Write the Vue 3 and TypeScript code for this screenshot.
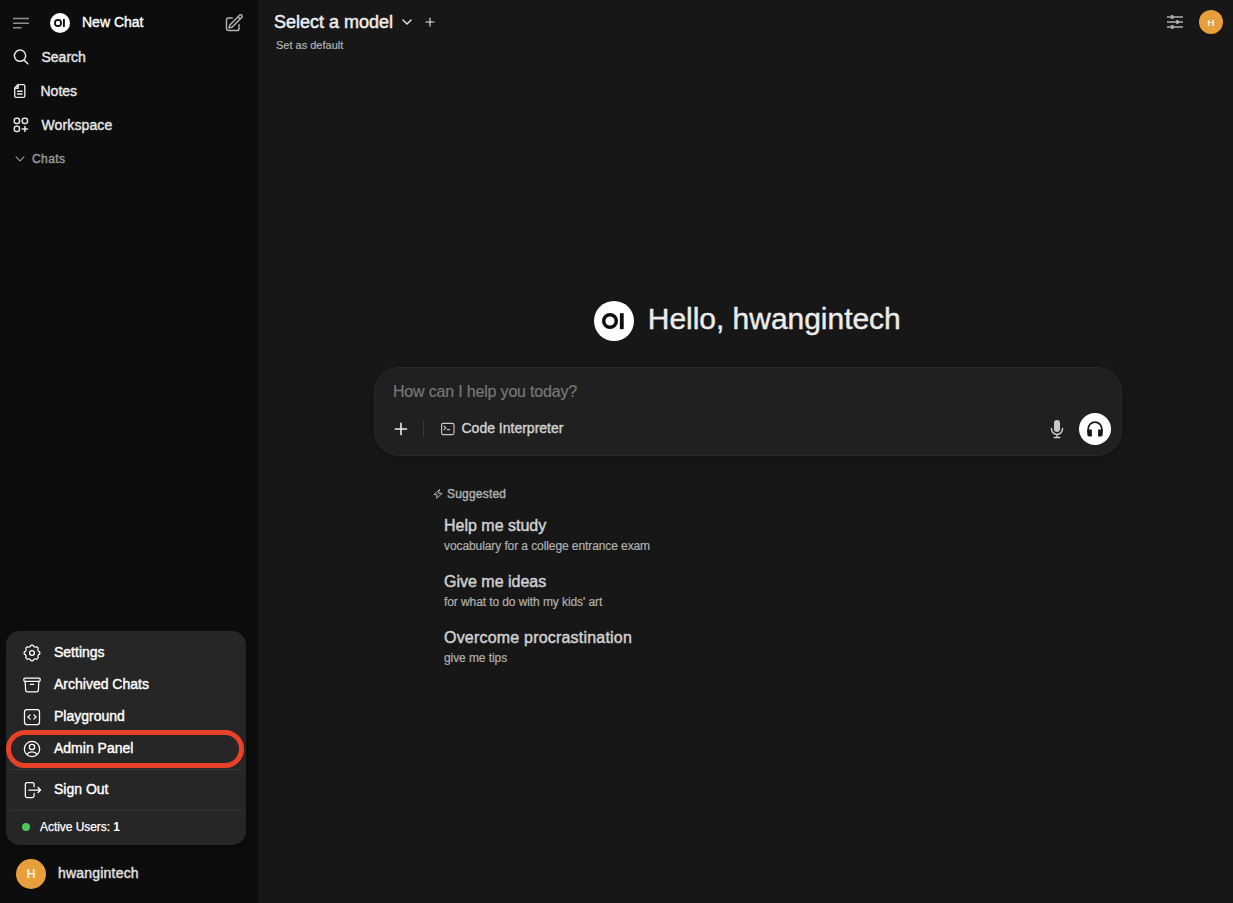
<script setup lang="ts">
interface Suggestion { title: string; detail: string; cls: string }
const suggestions: Suggestion[] = [
  { title: 'Help me study', detail: 'vocabulary for a college entrance exam', cls: 'tight' },
  { title: 'Give me ideas', detail: "for what to do with my kids' art", cls: 'tight' },
  { title: 'Overcome procrastination', detail: 'give me tips', cls: 'wide' },
]

// Gear outline: shallow rounded teeth around a circle.
function gearPath(teeth: number, radius: number, depth: number): string {
  const points: string[] = []
  const steps = teeth * 16
  for (let i = 0; i < steps; i++) {
    const a = (i / steps) * Math.PI * 2
    const r = radius + depth * Math.tanh(2 * Math.cos(teeth * a))
    points.push(`${(12 + r * Math.sin(a)).toFixed(2)} ${(12 - r * Math.cos(a)).toFixed(2)}`)
  }
  return `M${points.join('L')}Z`
}
const gear = gearPath(8, 8.7, 0.75)
</script>

<template>
  <div class="app">
    <aside class="sidebar">
      <header class="brand">
        <svg class="burger" viewBox="0 0 16 14"><path d="M0 2.5h16M0 7.2h16M0 11.8h8.5" /></svg>
        <svg class="logo" viewBox="0 0 40 40"><circle cx="20" cy="20" r="20" fill="#fff" /><circle cx="16" cy="20" r="6.2" fill="none" stroke="#0d0d0d" stroke-width="3.5" /><path d="M27.8 12v16" stroke="#0d0d0d" stroke-width="3.8" /></svg>
        <span class="brand-name">New Chat</span>
        <svg class="compose" viewBox="0 0 24 24"><path d="m16.86 4.49 1.69-1.69a1.88 1.88 0 1 1 2.65 2.65L10.58 16.07a4.5 4.5 0 0 1-1.9 1.13L6 18l.8-2.69a4.5 4.5 0 0 1 1.13-1.9zM16.86 4.49 19.5 7.13M18 14v4.75A2.25 2.25 0 0 1 15.75 21H5.25A2.25 2.25 0 0 1 3 18.75V8.25A2.25 2.25 0 0 1 5.25 6H10" /></svg>
      </header>
      <nav>
        <a class="nav-item"><svg viewBox="0 0 24 24" stroke-width="2"><path d="m21 21-5.2-5.2m0 0A7.5 7.5 0 1 0 5.2 5.2a7.5 7.5 0 0 0 10.6 10.6Z" /></svg><span>Search</span></a>
        <a class="nav-item notes"><svg viewBox="0 0 18 18" stroke-width="1.4"><path d="M6.1 2.6h5.3a1.4 1.4 0 0 1 1.4 1.4v10a1.4 1.4 0 0 1-1.4 1.4H4.1a1.4 1.4 0 0 1-1.4-1.4V6zM6.2 2.9v3.3H2.9M5.5 9.2h4.6M5.5 12h4.6" /></svg><span>Notes</span></a>
        <a class="nav-item"><svg viewBox="0 0 18 18" stroke-width="1.5"><rect x="2.3" y="2.3" width="5.2" height="5.2" rx="2" /><rect x="10.3" y="2.3" width="5.2" height="5.2" rx="2" /><rect x="2.3" y="10.3" width="5.2" height="5.2" rx="2" /><path d="M12.9 10.4v5.2M10.3 13H15.5" /></svg><span class="workspace">Workspace</span></a>
      </nav>
      <div class="chats"><svg viewBox="0 0 12 12"><path d="m2 3.8 4 4 4-4" /></svg><span>Chats</span></div>

      <section class="menu">
        <a class="menu-item"><svg viewBox="0 0 24 24"><path :d="gear" /><circle cx="12" cy="12" r="2.9" /></svg><span>Settings</span></a>
        <a class="menu-item"><svg viewBox="0 0 24 24"><path d="m20.25 7.5-.63 10.63A2.25 2.25 0 0 1 17.38 20.25H6.62a2.25 2.25 0 0 1-2.24-2.12L3.75 7.5M10 11.2h4M3.38 7.5h17.24c.63 0 1.13-.5 1.13-1.12V4.87c0-.62-.5-1.12-1.13-1.12H3.38c-.63 0-1.13.5-1.13 1.12v1.51c0 .62.5 1.12 1.13 1.12Z" /></svg><span>Archived Chats</span></a>
        <a class="menu-item"><svg viewBox="0 0 24 24"><rect x="3" y="3" width="18" height="18" rx="2.8" /><path d="M14.3 9.5 16.8 12l-2.5 2.5M9.7 14.5 7.2 12l2.5-2.5" /></svg><span>Playground</span></a>
        <a class="menu-item"><svg viewBox="0 0 24 24"><circle cx="12" cy="12" r="9.2" /><circle cx="12" cy="9.6" r="3.2" /><path d="M5.8 18.6a7.5 7.5 0 0 1 12.4 0" /></svg><span>Admin Panel</span><i class="highlight" /></a>
        <hr />
        <a class="menu-item"><svg viewBox="0 0 24 24"><path d="M14.5 8V5.2A2.2 2.2 0 0 0 12.3 3H6.2A2.2 2.2 0 0 0 4 5.2v13.6A2.2 2.2 0 0 0 6.2 21h6.1a2.2 2.2 0 0 0 2.2-2.2V16M8.2 12h14M19.3 9l3 3-3 3" /></svg><span>Sign Out</span></a>
        <hr />
        <div class="active"><b class="dot" /><span>Active Users: <strong>1</strong></span></div>
      </section>

      <footer class="user"><div class="avatar">H</div><span>hwangintech</span></footer>
    </aside>

    <main class="main">
      <header class="topbar">
        <div>
          <div class="model"><span>Select a model</span><svg class="chev" viewBox="0 0 12 12"><path d="m2 4 4 4 4-4" /></svg><svg class="add" viewBox="0 0 10 10"><path d="M5 1v8M1 5h8" /></svg></div>
          <div class="default">Set as default</div>
        </div>
        <div class="tools">
          <svg class="sliders" viewBox="0 0 16 14"><path d="M0 2h3.5M6.5 2H16M0 7h8.5M11.5 7H16M0 12h3.5M6.5 12H16" /><circle class="fill" cx="5.2" cy="2" r="1.9" /><circle class="fill" cx="10.3" cy="7" r="1.9" /><circle class="fill" cx="5.2" cy="12" r="1.9" /></svg>
          <div class="avatar small">H</div>
        </div>
      </header>

      <div class="center">
        <h1><svg viewBox="0 0 40 40"><circle cx="20" cy="20" r="20" fill="#fff" /><circle cx="16" cy="20" r="6.3" fill="none" stroke="#0d0d0d" stroke-width="3.4" /><path d="M27.8 12.2v16" stroke="#0d0d0d" stroke-width="3.8" /></svg><span>Hello, hwangintech</span></h1>
        <section class="composer">
          <div class="placeholder">How can I help you today?</div>
          <div class="actions">
            <svg class="plus" viewBox="0 0 12 12"><path d="M6 .4v11.2M.4 6h11.2" /></svg>
            <i class="sep" />
            <svg class="terminal" viewBox="0 0 14 12"><rect x=".6" y=".4" width="12.4" height="11.2" rx="1.6" /><path d="m3 3.2 2 1.7-2 1.7M6.3 6.6h2.2" /></svg>
            <span class="code">Code Interpreter</span>
            <svg class="mic" viewBox="0 0 14 20"><rect x="4" y="1" width="6" height="12" rx="3" class="fill" /><path d="M1.5 9.4v.6a5.5 5.5 0 0 0 11 0v-.6M7 15.5v3M4.2 18.6h5.6" /></svg>
            <button class="voice" aria-label="Voice"><svg viewBox="0 0 16 16"><path d="M1.2 11V8a6.8 6.8 0 0 1 13.6 0v3" /><path class="fill" d="M.3 8.6h4.6v6.8H2.3a2 2 0 0 1-2-2zM11.1 8.6h4.6v4.8a2 2 0 0 1-2 2h-2.6z" /></svg></button>
          </div>
        </section>
        <section class="suggested">
          <div class="label"><svg viewBox="0 0 12 12"><path d="M7.6.8 1 6.8h4L4.4 11.2l6.6-6h-4z" /></svg><span>Suggested</span></div>
          <article v-for="s in suggestions" :key="s.title" :class="s.cls"><h2>{{ s.title }}</h2><p>{{ s.detail }}</p></article>
        </section>
      </div>
    </main>
  </div>
</template>

<style>
body { background: #171717; }
</style>
<style scoped>
* { box-sizing: border-box; }
.app { width: 1233px; height: 903px; display: flex; overflow: hidden; background: #171717; color: #ececec; font-family: "Liberation Sans", Arial, sans-serif; font-size: 14px; -webkit-text-stroke: .4px currentColor; }
svg { fill: none; stroke: currentColor; stroke-linecap: round; stroke-linejoin: round; flex: none; display: block; overflow: visible; }
.sidebar { width: 258px; height: 903px; background: #0d0d0d; display: flex; flex-direction: column; flex: none; }
.brand { height: 40px; padding: 5px 14px 0 13px; display: flex; align-items: center; }
.burger { width: 16px; height: 14px; color: #8c8f8c; stroke-width: 1.6; stroke-linecap: butt; }
.logo { width: 20px; height: 20px; margin-left: 21px; stroke-linecap: butt; stroke: none; }
.brand-name { margin-left: 12px; line-height: 20px; margin-top: -1px; color: #fff; flex: 1; }
.compose { width: 20px; height: 20px; color: #b4b4b4; stroke-width: 1.7; }
.nav-item { height: 34px; padding-left: 12px; display: flex; align-items: center; gap: 11.5px; color: #e6e6e6; }
.nav-item svg { width: 18px; height: 18px; }
.nav-item span { line-height: 20px; }
.notes { gap: 10.5px; }
.workspace { letter-spacing: .12px; }
.chats { height: 34px; padding-left: 14px; display: flex; align-items: center; gap: 6px; color: #9b9b9b; font-size: 12px; letter-spacing: .4px; }
.chats svg { width: 12px; height: 12px; stroke-width: 1.1; }
.menu { width: 240px; height: 214px; margin: auto 0 0 6px; padding: 5px 4px; background: #262626; border-radius: 14px; box-shadow: 0 8px 14px #0004; color: #fff; }
.menu-item { position: relative; height: 32px; padding-left: 12px; display: flex; align-items: center; gap: 12px; }
.menu-item svg { width: 20px; height: 20px; stroke-width: 1.5; margin-top: 2px; }
.highlight { position: absolute; left: -4px; top: -2px; width: 238px; height: 38px; border: 5px solid #e94127; border-radius: 19px; }
hr { height: 1px; border: 0; margin: 5px 0 4px; background: #353535; }
hr + .menu-item { height: 31px; top: -1px; }
.active { height: 25px; margin-top: -1px; padding-left: 12px; display: flex; align-items: center; gap: 10px; font-size: 12px; letter-spacing: -.05px; -webkit-text-stroke: .25px; }
.active strong { font-weight: 700; -webkit-text-stroke: 0; }
.dot { width: 8px; height: 8px; border-radius: 50%; background: #50c65c; }
.user { height: 58px; padding-left: 16px; display: flex; align-items: center; gap: 12px; letter-spacing: .2px; color: #e3e3e3; }
.user span { margin-top: -2px; }
.avatar { width: 30px; height: 30px; border-radius: 50%; background: #e79f3c; color: #fff; display: flex; align-items: center; justify-content: center; font-size: 12px; letter-spacing: 0; flex: none; -webkit-text-stroke: .2px; }
.small { width: 24px; height: 24px; font-size: 9.5px; }
.main { flex: 1; display: flex; flex-direction: column; }
.topbar { height: 60px; display: flex; justify-content: space-between; padding: 10px 10px 0 16px; }
.model { display: flex; align-items: center; height: 24px; font-size: 18px; -webkit-text-stroke: .5px; }
.chev { width: 12px; height: 12px; margin-left: 8px; stroke-width: 1.4; }
.add { width: 10px; height: 10px; margin-left: 12px; margin-top: -1px; stroke-width: 1.1; }
.default { margin: 4px 0 0 2px; font-size: 11px; line-height: 14px; color: #b8b8b8; -webkit-text-stroke: .15px; }
.tools { height: 24px; display: flex; align-items: center; gap: 16px; }
.sliders { width: 16px; height: 14px; stroke-width: 1.6; color: #b0b0b0; stroke-linecap: butt; }
.center { width: 748px; margin: 238px 0 0 116px; }
h1 { height: 46px; margin: 0; padding-right: 1.5px; display: flex; justify-content: center; align-items: center; gap: 14px; font-size: 30px; font-weight: 400; line-height: 36px; letter-spacing: -.03px; -webkit-text-stroke: .4px; }
h1 svg { width: 40px; height: 40px; stroke: none; stroke-linecap: butt; }
h1 span { margin-top: -4px; }
.composer { height: 89px; margin-top: 23px; background: #202020; border: 1px solid #292929; border-radius: 25px; box-shadow: 0 5px 10px #0003; }
.placeholder { margin: 14px 0 0 18px; font-size: 16px; line-height: 20px; color: #777; letter-spacing: -.18px; -webkit-text-stroke: .2px; }
.actions { display: flex; align-items: center; height: 32px; margin-top: 11px; padding: 0 10px 0 20px; }
.plus { width: 12px; height: 12px; stroke-width: 1.6; }
.sep { width: 1px; height: 16px; background: #393939; margin-left: 16px; }
.terminal { width: 14px; height: 12px; margin-left: 17px; color: #c9c9c9; stroke-width: 1.1; }
.code { margin: -2px auto 0 6.5px; color: #d0d0d0; }
.mic { width: 14px; height: 20px; color: #c9c9c9; stroke-width: 1.5; }
.fill { fill: currentColor; stroke: none; }
.voice { width: 32px; height: 32px; margin-left: 15px; border: 0; padding: 0; border-radius: 50%; background: #fff; color: #161616; display: grid; place-items: center; }
.voice svg { width: 16px; height: 16px; stroke-width: 1.7; }
.suggested { padding: 30px 0 0 59px; }
.label { display: flex; align-items: center; gap: 4px; height: 16px; font-size: 12px; letter-spacing: .2px; color: #b0b0b0; }
.label svg { width: 10px; height: 10px; stroke-width: 1.2; }
article { height: 56px; margin-left: 11px; padding-top: 14px; }
h2 { margin: 0; font-size: 16px; line-height: 20px; font-weight: 400; color: #d0d0d0; -webkit-text-stroke: .45px; }
p { margin: 2px 0 0; font-size: 12px; line-height: 16px; color: #b0b0b0; -webkit-text-stroke: .2px; }
.tight p { letter-spacing: -.09px; }
.wide h2 { letter-spacing: .2px; }
.wide p { letter-spacing: -.08px; }
</style>
